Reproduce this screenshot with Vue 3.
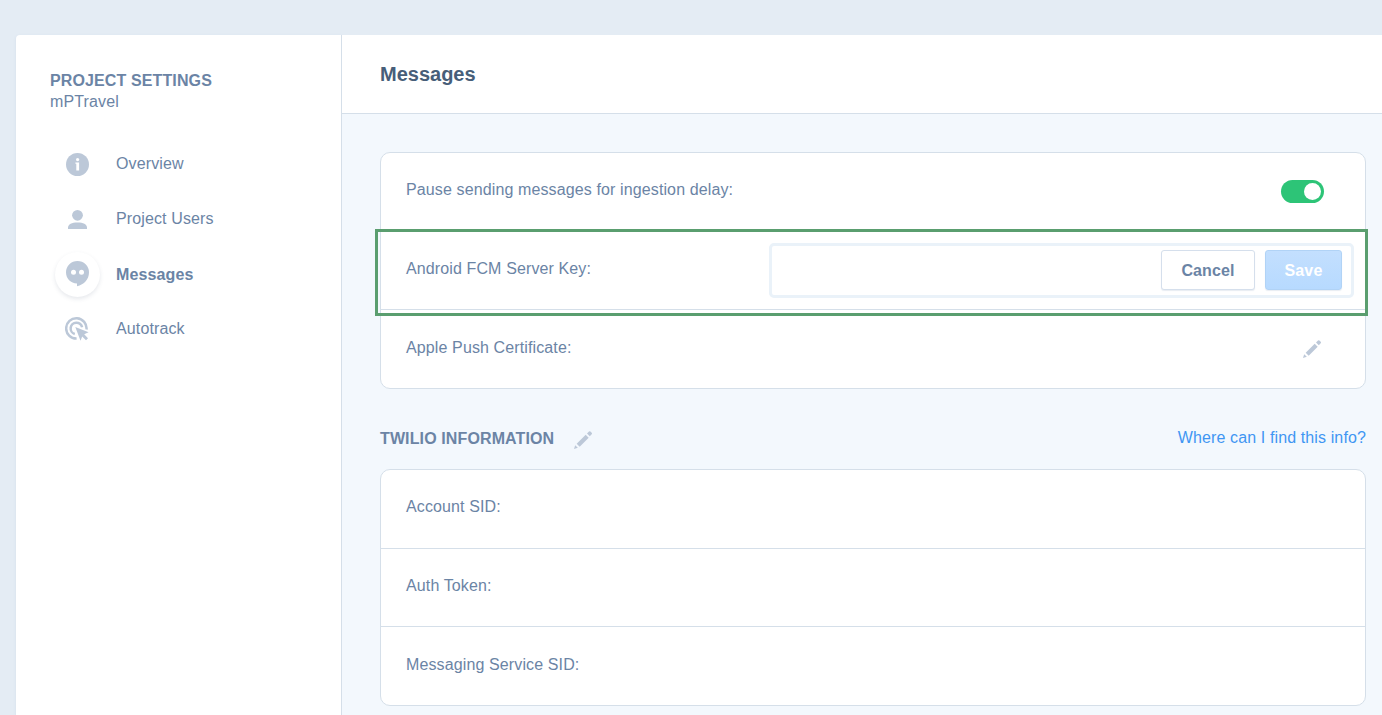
<script setup>
const navItems = [
  { id: 'overview', label: 'Overview' },
  { id: 'users', label: 'Project Users' },
  { id: 'messages', label: 'Messages', active: true },
  { id: 'autotrack', label: 'Autotrack' },
]
const twilioFields = [
  { id: 'account', label: 'Account SID:' },
  { id: 'token', label: 'Auth Token:' },
  { id: 'service', label: 'Messaging Service SID:' },
]
</script>

<template>
  <div class="page">
    <aside class="sidebar">
      <h2 class="title">PROJECT SETTINGS</h2>
      <div class="project">mPTravel</div>
      <nav class="nav">
        <a v-for="item in navItems" :key="item.id" class="nav-item" :class="[item.id, { active: item.active }]">
          <span class="bubble">
            <svg v-if="item.id === 'overview'" width="25" height="25" viewBox="0 0 25 25">
              <circle cx="12.5" cy="13.5" r="11.5" fill="#bcc8d8" />
              <circle cx="12.6" cy="8.6" r="1.6" fill="#fff" />
              <path d="M10.400 11.500H14.100V19.600H11.300V12.700H10.400Z" fill="#fff" />
            </svg>
            <svg v-else-if="item.id === 'users'" width="25" height="25" viewBox="0 0 25 25" fill="#bcc8d8">
              <circle cx="12.500" cy="9.300" r="5.400" />
              <path d="M3 23V21.600C3 18.500 6.800 16.600 12.500 16.600S22 18.500 22 21.600V23Z" />
            </svg>
            <svg v-else-if="item.id === 'messages'" width="25" height="27" viewBox="0 0 25 27">
              <path d="M12.500 0A11.500 11.300 0 0 0 1 11.300C1 17.700 5.700 22.300 12 22.500V25.200C19.300 23.700 24 18.300 24 11.300A11.500 11.300 0 0 0 12.500 0Z" fill="#bcc8d8" />
              <circle cx="8.500" cy="11.300" r="2.500" fill="#fff" />
              <circle cx="16.500" cy="11.300" r="2.500" fill="#fff" />
            </svg>
            <svg v-else width="25" height="25" viewBox="0 0 25 25">
              <g fill="none" stroke="#bcc8d8" stroke-width="2.500">
                <path d="M11.600 22.600A10.200 10.200 0 1 1 21.500 13.500" />
                <path d="M9.800 18A5.800 5.800 0 1 1 17.100 11.200" />
              </g>
              <path d="M10.300 11L23.600 16.300L19.200 18.300L23 22.200L21 24.200L17.200 20.500L15.500 24.800Z" fill="#bcc8d8" />
            </svg>
          </span>
          <span class="nav-label">{{ item.label }}</span>
        </a>
      </nav>
    </aside>

    <main class="main">
      <header class="header"><h1>Messages</h1></header>

      <section class="content">
        <div class="card push-card">
          <div class="row">
            <span class="label">Pause sending messages for ingestion delay:</span>
            <span class="toggle"><i class="knob"></i></span>
          </div>
          <div class="row key-row">
            <span class="label">Android FCM Server Key:</span>
            <div class="key-input">
              <button class="btn cancel">Cancel</button>
              <button class="btn save">Save</button>
            </div>
            <div class="highlight"></div>
          </div>
          <div class="row">
            <span class="label">Apple Push Certificate:</span>
            <svg class="pencil" width="20" height="20" viewBox="0 0 20 20" fill="#bcc8d8">
              <path d="M1 19L2.200 15.200L4.800 17.800Z" />
              <path d="M3.700 13.700L12.700 4.700L15.700 7.700L6.700 16.700Z" />
              <path d="M14 3.500L16 1.500Q16.700 .8 17.400 1.500L18.700 2.800Q19.400 3.500 18.700 4.200L16.800 6.200Z" />
            </svg>
          </div>
        </div>

        <div class="section-head">
          <h3>TWILIO INFORMATION</h3>
          <svg class="head-pencil" width="20" height="20" viewBox="0 0 20 20" fill="#bcc8d8">
            <path d="M1 19L2.200 15.200L4.800 17.800Z" />
            <path d="M3.700 13.700L12.700 4.700L15.700 7.700L6.700 16.700Z" />
            <path d="M14 3.500L16 1.500Q16.700 .8 17.400 1.500L18.700 2.800Q19.400 3.500 18.700 4.200L16.800 6.200Z" />
          </svg>
          <a class="help">Where can I find this info?</a>
        </div>

        <div class="card twilio-card">
          <div v-for="field in twilioFields" :key="field.id" class="row">
            <span class="label">{{ field.label }}</span>
          </div>
        </div>
      </section>
    </main>
  </div>
</template>

<style>
body { background: #e4ecf4; overflow: hidden; }
</style>

<style scoped>
* { box-sizing: border-box; }
.page {
  display: flex;
  height: 715px;
  padding: 35px 0 0 16px;
  background: #e4ecf4;
  overflow: hidden;
  font: 16px/20px "Liberation Sans", Arial, sans-serif;
  letter-spacing: .12px;
  color: #6b84a5;
}
.sidebar {
  flex: none;
  width: 326px;
  padding: 35px 0 0 34px;
  background: #fff;
  border-right: 1px solid #d5dfe9;
  border-radius: 4px 0 0 0;
  box-shadow: 0 1px 3px rgba(100, 130, 170, .13);
}
.title { margin: 0; font-size: 16px; line-height: 21px; font-weight: 700; }
.project { line-height: 21px; }
.nav { display: flex; flex-direction: column; margin: 25px 0 0 5px; }
.nav-item { display: flex; align-items: center; height: 56px; }
.nav-item.overview { height: 54px; }
.nav-item.autotrack { height: 52px; }
.bubble {
  display: flex;
  align-items: center;
  justify-content: center;
  width: 45px;
  height: 45px;
  margin-top: -1px;
  border-radius: 50%;
}
.active .bubble { box-shadow: 0 2px 4px rgba(60, 80, 110, .13); }
.bubble svg { display: block; }
.nav-label { margin-left: 16px; }
.active .nav-label { font-weight: 700; }

.main { flex: 1; min-width: 0; display: flex; flex-direction: column; background: #f3f8fd; }
.header {
  flex: none;
  height: 79px;
  padding: 27px 0 0 38px;
  background: #fff;
  border-bottom: 1px solid #d5dfe9;
}
.header h1 { margin: 0; font-size: 20px; line-height: 24px; letter-spacing: 0; color: #475e79; }
.content { padding: 38px 16px 0 38px; }
.card {
  display: grid;
  height: 237px;
  background: #fff;
  border: 1px solid #d5dfe9;
  border-radius: 10px;
}
.push-card { grid-template-rows: 78px 79px 78px; }
.twilio-card { grid-template-rows: 79px 78px 78px; }
.row {
  position: relative;
  display: flex;
  justify-content: space-between;
  align-items: flex-start;
  padding: 27px 0 0 25px;
  border-bottom: 1px solid #d5dfe9;
}
.row:last-child { border-bottom: 0; padding-top: 28px; }
.label { white-space: nowrap; }
.toggle {
  display: flex;
  justify-content: flex-end;
  align-items: center;
  width: 43px;
  height: 23px;
  margin-right: 41px;
  padding-right: 3px;
  border-radius: 12px;
  background: #2dc477;
}
.knob { width: 17px; height: 17px; border-radius: 50%; background: #fff; }
.key-row { padding-top: 12px; }
.key-row .label { margin-top: 16px; }
.key-input {
  display: flex;
  justify-content: flex-end;
  gap: 10px;
  width: 585px;
  height: 55px;
  margin-right: 11px;
  padding: 4px 9px 0 0;
  border: 3px solid #eaf2f9;
  border-radius: 5px;
}
.btn {
  height: 40px;
  padding: 2px 0 0;
  border-radius: 3px;
  font: 700 16px/20px "Liberation Sans", Arial, sans-serif;
  letter-spacing: .12px;
}
.cancel {
  width: 94px;
  color: #6b84a5;
  background: #fff;
  border: 1px solid #d5dfec;
  box-shadow: 0 1px 1px rgba(100, 130, 170, .15);
}
.save {
  width: 77px;
  color: #fff;
  background: linear-gradient(#c3dffe, #b7daff);
  border: 1px solid #b1d3f6;
  box-shadow: 0 1px 1px rgba(100, 130, 170, .15);
}
.highlight {
  position: absolute;
  top: -2px;
  left: -6px;
  width: 993px;
  height: 87px;
  border: 3px solid #5a9e6f;
  z-index: 1;
}
.pencil { margin: 1px 43px 0 0; }
.section-head { display: flex; align-items: flex-start; height: 80px; padding-top: 39px; }
.section-head h3 { margin: 1px 0 0; width: 193px; font-size: 16px; line-height: 20px; white-space: nowrap; }
.head-pencil { margin-top: 2px; }
.help { margin-left: auto; color: #3f96f3; }
</style>
